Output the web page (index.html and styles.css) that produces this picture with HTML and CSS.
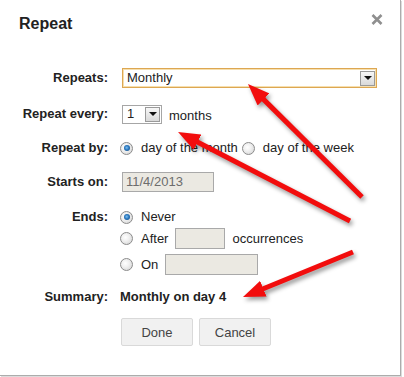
FILE: index.html
```html
<!DOCTYPE html>
<html>
<head>
<meta charset="utf-8">
<link rel="stylesheet" href="styles.css">
</head>
<body>
<div class="dialog">
  <div class="header">
    <div class="title">Repeat</div>
    <svg class="close" width="12" height="11" viewBox="0 0 12 11"><path d="M1.5 1 L10.5 10 M10.5 1 L1.5 10" stroke="#8f8f8f" stroke-width="2.6"/></svg>
  </div>
  <div class="form">
    <div class="row r1">
      <div class="label">Repeats:</div>
      <div class="select wide"><span class="val">Monthly</span><span class="btn"><span class="tri"></span></span></div>
    </div>
    <div class="row r2">
      <div class="label">Repeat every:</div>
      <div class="ctl"><div class="select small"><span class="val">1</span><span class="btn"><span class="tri"></span></span></div><span class="after-select">months</span></div>
    </div>
    <div class="row r3">
      <div class="label">Repeat by:</div>
      <div class="ctl"><span class="radio on"></span><span class="rtext">day of the month</span><span class="radio second"></span><span class="rtext">day of the week</span></div>
    </div>
    <div class="row r4">
      <div class="label">Starts on:</div>
      <div class="ctl"><div class="input date">11/4/2013</div></div>
    </div>
    <div class="row ends">
      <div class="label lab-ends">Ends:</div>
      <div class="opts">
        <div class="opt never"><span class="radio on"></span><span class="rtext">Never</span></div>
        <div class="opt afterrow"><span class="radio"></span><span class="rtext">After</span><div class="input occ"></div><span class="occtext">occurrences</span></div>
        <div class="opt onrow"><span class="radio"></span><span class="rtext">On</span><div class="input ondate"></div></div>
      </div>
    </div>
    <div class="row summary">
      <div class="label">Summary:</div>
      <div class="sumval">Monthly on day 4</div>
    </div>
    <div class="buttons">
      <div class="button">Done</div>
      <div class="button">Cancel</div>
    </div>
  </div>
</div>
<svg class="arrows" width="404" height="377" viewBox="0 0 404 377">
  <defs>
    <marker id="head" markerUnits="userSpaceOnUse" viewBox="0 0 22 17" markerWidth="22" markerHeight="17" refX="10" refY="8.5" orient="auto">
      <path d="M0 0 L22 8.5 L0 17 Z" fill="#f20d0d"/>
    </marker>
  </defs>
  <g class="arrowg">
    <line x1="362" y1="197" x2="256.5" y2="92.4" stroke="#f20d0d" stroke-width="5" marker-end="url(#head)"/>
    <line x1="350" y1="221" x2="188.7" y2="137.5" stroke="#f20d0d" stroke-width="5" marker-end="url(#head)"/>
    <line x1="353" y1="252" x2="254.1" y2="292.5" stroke="#f20d0d" stroke-width="5" marker-end="url(#head)"/>
  </g>
</svg>
</body>
</html>
```

FILE: styles.css
```css
html, body {
  margin: 0;
  padding: 0;
  background: #fff;
}
body {
  width: 404px;
  height: 377px;
  overflow: hidden;
  position: relative;
  font-family: "Liberation Sans", Arial, sans-serif;
  font-size: 13px;
  color: #222;
}
.dialog {
  width: 400px;
  height: 375px;
  background: #fff;
  border-right: 1px solid #acacac;
  border-bottom: 1px solid #acacac;
  box-shadow: 1px 1px 0 #dcdcdc;
  box-sizing: content-box;
}
.header {
  display: flex;
  justify-content: space-between;
  align-items: flex-start;
  padding: 14px 17px 0 19px;
}
.title {
  font-size: 16px;
  font-weight: bold;
  line-height: 19px;
  color: #222;
}
.close {
  display: block;
}
.form {
  display: flex;
  flex-direction: column;
}
.row {
  display: grid;
  grid-template-columns: 108px 1fr;
  column-gap: 12px;
  align-items: center;
  height: 20px;
}
.label {
  text-align: right;
  font-weight: bold;
  line-height: 16px;
  white-space: nowrap;
}
.r1 { margin-top: 35px; }
.r2 { margin-top: 16px; }
.r3 { margin-top: 14px; }
.r4 { margin-top: 14px; }
.ends { margin-top: 15px; height: auto; align-items: start; }
.lab-ends { margin-top: 2px; }
.summary { margin-top: 12px; }
.ctl {
  display: flex;
  align-items: center;
}
.select {
  box-sizing: border-box;
  height: 20px;
  display: flex;
  align-items: center;
  justify-content: space-between;
  background: #fff;
  padding: 0 1px 0 4px;
  line-height: 16px;
}
.wide {
  width: 255px;
  margin-left: 2px;
  border: 1px solid #dda752;
  box-shadow: inset 0 0 0 1px #f6dfae;
}
.small {
  width: 40px;
  height: 19px;
  margin-left: 2px;
  border: 1px solid #a6a6a6;
}
.btn {
  width: 15px;
  height: 15px;
  box-sizing: border-box;
  border: 1px solid #9a9a9a;
  background: linear-gradient(#f7f7f7, #d9d9d9);
  display: flex;
  align-items: center;
  justify-content: center;
}
.tri {
  width: 0;
  height: 0;
  border-left: 4px solid transparent;
  border-right: 4px solid transparent;
  border-top: 4px solid #111;
}
.after-select {
  margin-left: 7px;
  position: relative;
  top: 1px;
}
.radio {
  width: 13px;
  height: 13px;
  box-sizing: border-box;
  border-radius: 50%;
  border: 1px solid #8b8b8b;
  background: radial-gradient(circle at 40% 40%, #ffffff 0%, #f0f0f0 40%, #cfcfcf 100%);
  display: inline-block;
  flex: none;
  position: relative;
}
.radio.on::after {
  content: "";
  position: absolute;
  left: 2.5px;
  top: 2.5px;
  width: 6px;
  height: 6px;
  border-radius: 50%;
  background: radial-gradient(circle at 45% 45%, #7fc0f0 0%, #2a78bf 45%, #0c3f73 100%);
}
.rtext {
  margin-left: 8px;
  line-height: 16px;
}
.radio.second {
  margin-left: 4px;
}
.radio.second + .rtext {
  margin-left: 8px;
}
.input {
  box-sizing: border-box;
  background: #ebe9e2;
  border: 1px solid #a9a9a9;
}
.date {
  width: 92px;
  height: 20px;
  margin-left: 2px;
  padding-left: 3px;
  color: #6d6d6d;
  line-height: 18px;
}
.opts {
  display: flex;
  flex-direction: column;
}
.opt {
  display: flex;
  align-items: center;
}
.never { height: 20px; }
.afterrow { height: 21px; margin-top: 1px; }
.onrow { height: 21px; margin-top: 5px; }
.occ {
  width: 50px;
  height: 21px;
  margin-left: 7px;
}
.occtext { margin-left: 7px; }
.ondate {
  width: 93px;
  height: 21px;
  margin-left: 7px;
}
.sumval {
  font-weight: bold;
  line-height: 16px;
}
.buttons {
  display: flex;
  gap: 6px;
  margin-top: 11px;
  padding-left: 121px;
}
.button {
  width: 72px;
  height: 28px;
  box-sizing: border-box;
  border: 1px solid #d9d9d9;
  border-radius: 2px;
  background: #f1f1f1;
  color: #444;
  display: flex;
  align-items: center;
  justify-content: center;
}
.arrows {
  position: absolute;
  left: 0;
  top: 0;
  pointer-events: none;
}
.arrowg {
  filter: drop-shadow(2px 3px 2px rgba(0, 0, 0, 0.4));
}
```
